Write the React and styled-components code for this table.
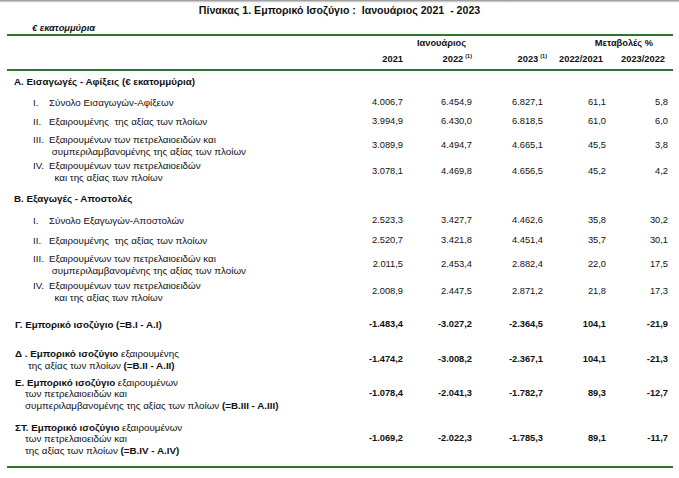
import React from 'react';
import styled, { createGlobalStyle } from 'styled-components';

const GlobalStyle = createGlobalStyle`
    html, body {
        margin: 0;
        padding: 0;
        background: #fff;
    }
    body {
        font-family: "Liberation Sans", Arial, sans-serif;
        color: #111;
    }
`;

const COLS = '333px 63px 69px 71px 63px 62px';

const Page = styled.div`
    width: 679px;
    height: 478px;
    overflow: hidden;
    background: #fff;
`;

const TopShade = styled.div`
    height: 3px;
    background: linear-gradient(#8c8c8c, #e4e4e4 70%, #fff);
`;

const Title = styled.h1`
    margin: 0;
    font-size: 10.6px;
    line-height: 14px;
    font-weight: bold;
    text-align: center;
    white-space: pre;
`;

const Sheet = styled.div`
    margin-left: 7px;
    width: 666px;
`;

const UnitLabel = styled.div`
    margin-top: 5.5px;
    padding-left: 25px;
    font-size: 9.3px;
    line-height: 11px;
    font-weight: bold;
    font-style: italic;
`;

const Rule = styled.div`
    margin-top: ${p => p.gap}px;
    height: 2px;
    background: #2c772d;
`;

const HeaderRow = styled.div`
    display: grid;
    grid-template-columns: ${COLS};
    padding-right: 5px;
    margin-top: ${p => p.gap}px;
    font-size: 9.3px;
    line-height: 11.5px;
    font-weight: bold;
`;

const GroupHead = styled.div`
    grid-column: ${p => p.span};
    justify-self: ${p => p.align || 'center'};
    margin-right: ${p => p.shift || 0}px;
`;

const YearHead = styled.div`
    text-align: right;
    white-space: nowrap;
    margin-right: ${p => p.shift || 0}px;
`;

const Sup = styled.sup`
    font-size: 5.5px;
    line-height: 0;
    vertical-align: 4px;
    margin-left: 2px;
`;

const Row = styled.div`
    display: grid;
    grid-template-columns: ${COLS};
    align-items: center;
    padding-right: 5px;
    margin-top: ${p => p.gap}px;
    font-size: 9.3px;
    line-height: 11.5px;
`;

const SectionTitle = styled.div`
    grid-column: 1 / -1;
    padding-left: 7px;
    font-size: 9.8px;
    font-weight: bold;
`;

const ItemLabel = styled.div`
    display: flex;
    padding-left: 26px;
    font-size: 9.8px;
`;

const Numeral = styled.span`
    width: 16px;
    flex: none;
`;

const Lines = styled.div`
    display: flex;
    flex-direction: column;
`;

const Line = styled.span`
    padding-left: ${p => p.indent || 0}px;
    white-space: pre;
`;

const BalanceLabel = styled.div`
    display: flex;
    flex-direction: column;
    padding-left: 8px;
    font-size: 9.8px;
    font-weight: ${p => (p.bold ? 'bold' : 'normal')};
`;

const B = styled.b`
    font-weight: bold;
`;

const Cell = styled.div`
    text-align: right;
    white-space: nowrap;
    font-weight: ${p => (p.bold ? 'bold' : 'normal')};
`;

const Numbers = ({ values, bold }) =>
    values.map((v, i) => (
        <Cell key={i} bold={bold}>
            {v}
        </Cell>
    ));

const imports = [
    { n: 'I.', lines: ['Σύνολο Εισαγωγών-Αφίξεων'], v: ['4.006,7', '6.454,9', '6.827,1', '61,1', '5,8'], gap: 9.5 },
    { n: 'II.', lines: ['Εξαιρουμένης  της αξίας των πλοίων'], v: ['3.994,9', '6.430,0', '6.818,5', '61,0', '6,0'], gap: 7.5 },
    {
        n: 'III.',
        lines: ['Εξαιρουμένων των πετρελαιοειδών και', ' συμπεριλαμβανομένης της αξίας των πλοίων'],
        v: ['3.089,9', '4.494,7', '4.665,1', '45,5', '3,8'],
        gap: 6.75,
    },
    {
        n: 'IV.',
        lines: ['Εξαιρουμένων των πετρελαιοειδών', '  και της αξίας των πλοίων'],
        v: ['3.078,1', '4.469,8', '4.656,5', '45,2', '4,2'],
        gap: 3,
    },
];

const exports = [
    { n: 'I.', lines: ['Σύνολο Εξαγωγών-Αποστολών'], v: ['2.523,3', '3.427,7', '4.462,6', '35,8', '30,2'], gap: 10.5 },
    { n: 'II.', lines: ['Εξαιρουμένης  της αξίας των πλοίων'], v: ['2.520,7', '3.421,8', '4.451,4', '35,7', '30,1'], gap: 8.5 },
    {
        n: 'III.',
        lines: ['Εξαιρουμένων των πετρελαιοειδών και', ' συμπεριλαμβανομένης της αξίας των πλοίων'],
        v: ['2.011,5', '2.453,4', '2.882,4', '22,0', '17,5'],
        gap: 6.75,
    },
    {
        n: 'IV.',
        lines: ['Εξαιρουμένων των πετρελαιοειδών', '  και της αξίας των πλοίων'],
        v: ['2.008,9', '2.447,5', '2.871,2', '21,8', '17,3'],
        gap: 4,
    },
];

const ItemRow = ({ item }) => (
    <Row gap={item.gap}>
        <ItemLabel>
            <Numeral>{item.n}</Numeral>
            <Lines>
                {item.lines.map((l, i) => (
                    <Line key={i}>{l}</Line>
                ))}
            </Lines>
        </ItemLabel>
        <Numbers values={item.v} />
    </Row>
);

const App = () => (
    <Page>
        <GlobalStyle />
        <TopShade />
        <Title>{'Πίνακας 1. Εμπορικό Ισοζύγιο :  Ιανουάριος 2021  - 2023'}</Title>
        <Sheet>
            <UnitLabel>€ εκατομμύρια</UnitLabel>
            <Rule gap={0} />
            <HeaderRow gap={2.75}>
                <GroupHead span="2 / 5">Ιανουάριος</GroupHead>
                <GroupHead span="5 / 7" align="end" shift={15}>
                    Μεταβολές %
                </GroupHead>
            </HeaderRow>
            <HeaderRow gap={4.5}>
                <div />
                <YearHead>2021</YearHead>
                <YearHead>
                    2022<Sup>(1)</Sup>
                </YearHead>
                <YearHead shift={-4}>
                    2023<Sup>(1)</Sup>
                </YearHead>
                <YearHead shift={3}>2022/2021</YearHead>
                <YearHead shift={3}>2023/2022</YearHead>
            </HeaderRow>
            <Rule gap={3.25} />

            <Row gap={5}>
                <SectionTitle>Α. Εισαγωγές - Αφίξεις (€ εκατομμύρια)</SectionTitle>
            </Row>
            {imports.map((item, i) => (
                <ItemRow key={i} item={item} />
            ))}

            <Row gap={9.75}>
                <SectionTitle>Β. Εξαγωγές - Αποστολές</SectionTitle>
            </Row>
            {exports.map((item, i) => (
                <ItemRow key={i} item={item} />
            ))}

            <Row gap={15.75}>
                <BalanceLabel bold>Γ. Εμπορικό ισοζύγιο (=B.I - A.I)</BalanceLabel>
                <Numbers bold values={['-1.483,4', '-3.027,2', '-2.364,5', '104,1', '-21,9']} />
            </Row>

            <Row gap={17.75}>
                <BalanceLabel>
                    <Line>
                        <B>Δ . Εμπορικό ισοζύγιο</B> εξαιρουμένης
                    </Line>
                    <Line indent={13}>
                        της αξίας των πλοίων <B>(=B.II - A.II)</B>
                    </Line>
                </BalanceLabel>
                <Numbers bold values={['-1.474,2', '-3.008,2', '-2.367,1', '104,1', '-21,3']} />
            </Row>

            <Row gap={5.25}>
                <BalanceLabel>
                    <Line>
                        <B>Ε. Εμπορικό ισοζύγιο</B> εξαιρουμένων
                    </Line>
                    <Line indent={10}>των πετρελαιοειδών και</Line>
                    <Line indent={10}>
                        συμπεριλαμβανομένης της αξίας των πλοίων <B>(=B.III - A.III)</B>
                    </Line>
                </BalanceLabel>
                <Numbers bold values={['-1.078,4', '-2.041,3', '-1.782,7', '89,3', '-12,7']} />
            </Row>

            <Row gap={10.5}>
                <BalanceLabel>
                    <Line>
                        <B>ΣΤ. Εμπορικό ισοζύγιο</B> εξαιρουμένων
                    </Line>
                    <Line indent={10}>των πετρελαιοειδών και</Line>
                    <Line indent={10}>
                        της αξίας των πλοίων <B>(=B.IV - A.IV)</B>
                    </Line>
                </BalanceLabel>
                <Numbers bold values={['-1.069,2', '-2.022,3', '-1.785,3', '89,1', '-11,7']} />
            </Row>

            <Rule gap={10} />
        </Sheet>
    </Page>
);

export default App;
